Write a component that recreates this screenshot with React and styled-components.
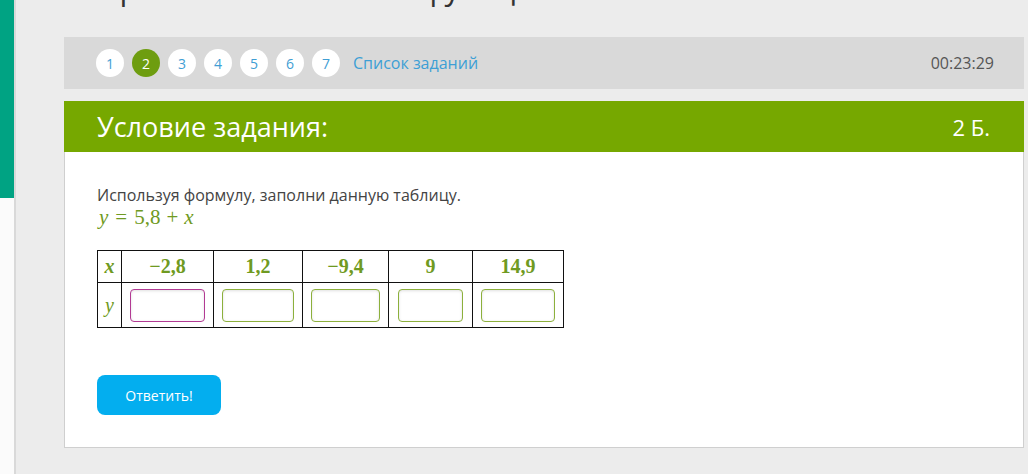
import React from 'react';
import styled, { createGlobalStyle } from 'styled-components';

const GlobalStyle = createGlobalStyle`
  html, body {
    margin: 0;
    padding: 0;
    background: #ececec;
    font-family: "Open Sans", "Liberation Sans", sans-serif;
  }
`;

const Page = styled.div`
  display: flex;
  min-height: 474px;
  overflow: hidden;
`;

const Sidebar = styled.div`
  width: 14px;
  flex-shrink: 0;
  background: #fbfbfb;
  border-right: 2px solid #d9d9d9;
`;

const SidebarAccent = styled.div`
  height: 198px;
  background: #00a383;
`;

const Main = styled.div`
  flex: 1;
  padding: 0 4px 0 48px;
`;

const PageTitle = styled.h1`
  margin: -33px 0 0 33px;
  height: 42px;
  font-size: 31px;
  line-height: 42px;
  font-weight: 400;
  color: #333;
  white-space: nowrap;
`;

const NavBar = styled.div`
  margin-top: 28px;
  height: 52px;
  background: #d9d9d9;
  display: flex;
  align-items: center;
  padding: 0 30px 0 32px;
`;

const Steps = styled.div`
  display: flex;
  align-items: center;
  gap: 8px;
`;

const Step = styled.span`
  width: 28px;
  height: 28px;
  border-radius: 50%;
  display: flex;
  align-items: center;
  justify-content: center;
  font-size: 14px;
  background: ${p => (p.$active ? '#6e9d10' : '#fff')};
  color: ${p => (p.$active ? '#fff' : '#3f9ed4')};
`;

const TaskListLink = styled.a`
  margin-left: 13px;
  font-size: 16px;
  color: #3d9fd5;
  text-decoration: none;
`;

const Timer = styled.span`
  margin-left: auto;
  font-size: 16px;
  color: #555;
`;

const Card = styled.div`
  margin-top: 12px;
  background: #fff;
  border: 1px solid #cfcfcf;
  border-top: none;
`;

const CardHeader = styled.div`
  height: 51px;
  margin: 0 -1px;
  background: #76a800;
  color: #fff;
  display: flex;
  align-items: center;
  justify-content: space-between;
  padding: 0 34px 0 33px;
`;

const CardTitle = styled.h2`
  margin: 0;
  font-size: 27px;
  font-weight: 400;
`;

const Points = styled.span`
  font-size: 22px;
`;

const CardBody = styled.div`
  padding: 33px 32px 32px;
`;

const Instruction = styled.p`
  margin: 0;
  font-size: 16px;
  line-height: 20px;
  color: #444;
`;

const Formula = styled.div`
  margin: 1px 0 0 2px;
  font-family: "Liberation Serif", "DejaVu Serif", serif;
  font-size: 21px;
  line-height: 22px;
  color: #6f9a22;
`;

const MathVar = styled.i`
  font-style: italic;
`;

const Op = styled.span`
  margin: 0 ${p => p.$space || '7px'};
`;

const ValueTable = styled.table`
  margin-top: 22px;
  width: 467px;
  table-layout: fixed;
  border-collapse: collapse;
  font-family: "Liberation Serif", "DejaVu Serif", serif;
  color: #6f9a22;
`;

const HeadCell = styled.td`
  border: 1px solid #111;
  height: 32px;
  padding: 0;
  text-align: center;
  font-size: 20px;
  font-weight: 600;
  box-sizing: border-box;
`;

const InputCell = styled.td`
  border: 1px solid #111;
  height: 45px;
  padding: 0 ${p => p.$px}px;
  text-align: center;
  font-size: 20px;
  box-sizing: border-box;
`;

const AnswerInput = styled.input`
  display: block;
  box-sizing: border-box;
  width: 100%;
  height: 33px;
  border: 1px solid ${p => (p.$focus ? '#b23a93' : '#8cb03c')};
  border-radius: 4px;
  box-shadow: inset 0 1px 3px rgba(0, 0, 0, 0.12);
  background: #fff;
  outline: none;
`;

const SubmitButton = styled.button`
  margin-top: 47px;
  width: 124px;
  height: 40px;
  border: none;
  border-radius: 8px;
  background: #03aeef;
  color: #fff;
  font-family: "Open Sans", "Liberation Sans", sans-serif;
  font-size: 14px;
  cursor: pointer;
`;

const columns = [
  { label: '−2,8', w: 92, px: 8 },
  { label: '1,2', w: 89, px: 8 },
  { label: '−9,4', w: 86, px: 8 },
  { label: '9', w: 84, px: 9 },
  { label: '14,9', w: 91, px: 8 },
];

function App() {
  return (
    <>
      <GlobalStyle />
      <Page>
        <Sidebar>
          <SidebarAccent />
        </Sidebar>
        <Main>
          <PageTitle>Прямая зависимость функции</PageTitle>
          <NavBar>
            <Steps>
              {[1, 2, 3, 4, 5, 6, 7].map(n => (
                <Step key={n} $active={n === 2}>{n}</Step>
              ))}
            </Steps>
            <TaskListLink href="#">Список заданий</TaskListLink>
            <Timer>00:23:29</Timer>
          </NavBar>
          <Card>
            <CardHeader>
              <CardTitle>Условие задания:</CardTitle>
              <Points>2 Б.</Points>
            </CardHeader>
            <CardBody>
              <Instruction>Используя формулу, заполни данную таблицу.</Instruction>
              <Formula>
                <MathVar>y</MathVar>
                <Op>=</Op>
                5,8
                <Op $space="6px">+</Op>
                <MathVar>x</MathVar>
              </Formula>
              <ValueTable>
                <colgroup>
                  <col style={{ width: 24 }} />
                  {columns.map(c => (
                    <col key={c.label} style={{ width: c.w }} />
                  ))}
                </colgroup>
                <tbody>
                  <tr>
                    <HeadCell><MathVar>x</MathVar></HeadCell>
                    {columns.map(c => (
                      <HeadCell key={c.label}>{c.label}</HeadCell>
                    ))}
                  </tr>
                  <tr>
                    <InputCell $px={0}><MathVar>y</MathVar></InputCell>
                    {columns.map((c, i) => (
                      <InputCell key={c.label} $px={c.px}>
                        <AnswerInput type="text" $focus={i === 0} />
                      </InputCell>
                    ))}
                  </tr>
                </tbody>
              </ValueTable>
              <SubmitButton>Ответить!</SubmitButton>
            </CardBody>
          </Card>
        </Main>
      </Page>
    </>
  );
}

export default App;
